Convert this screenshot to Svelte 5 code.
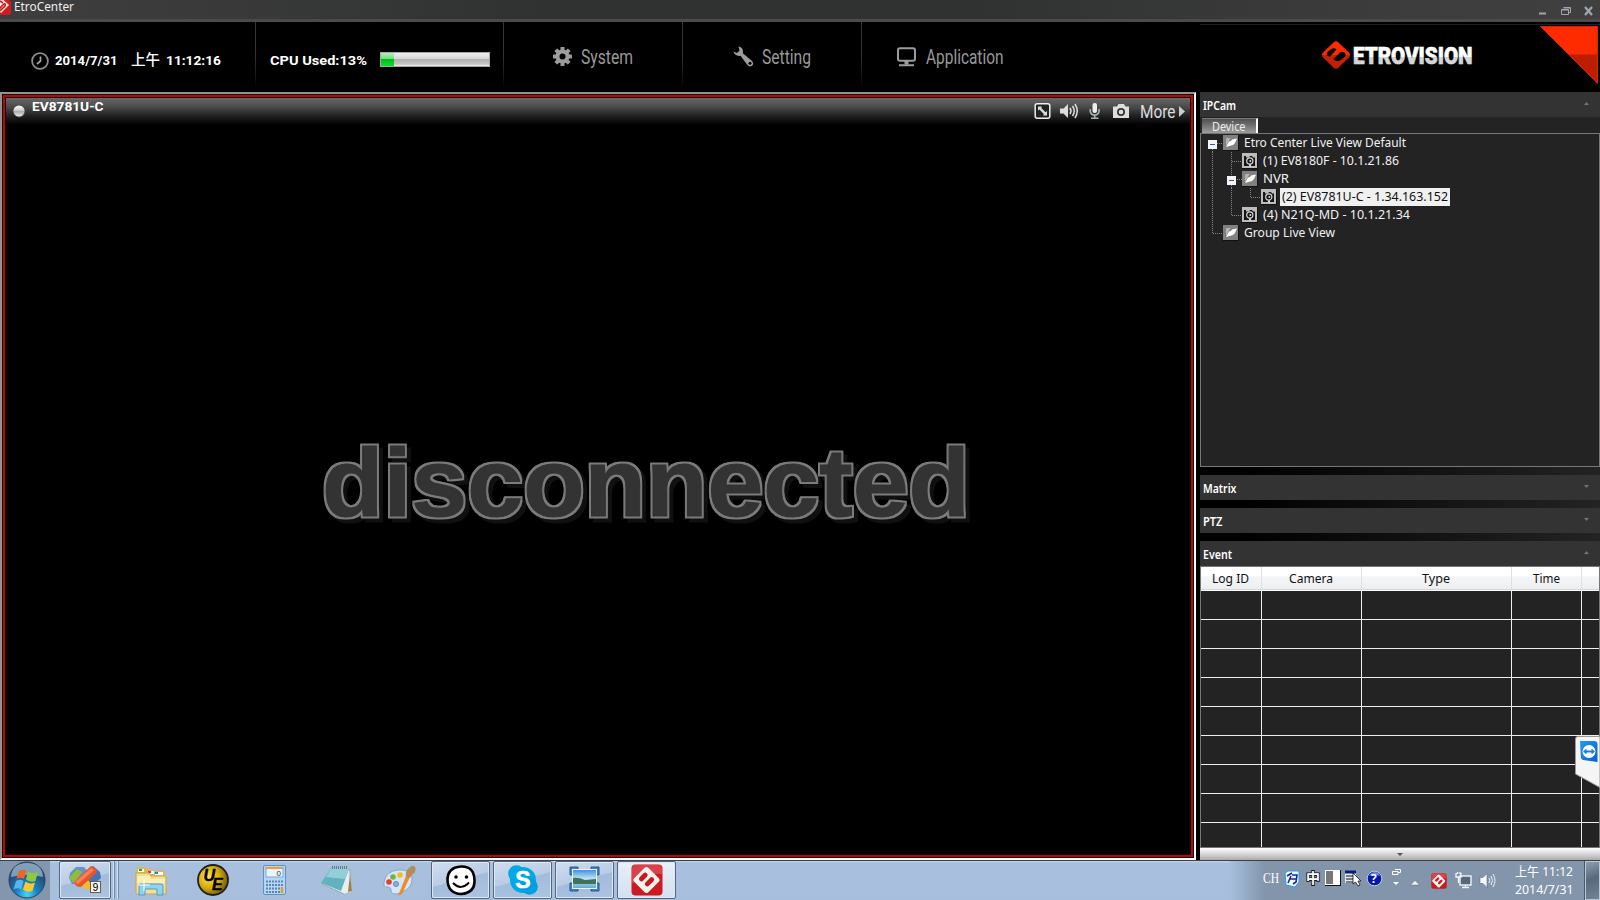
<script>
  const tree = [
    { text: 'Etro Center Live View Default', w: 162, lead: 43, icon: 'folder', ix: 22, box: 7, lines: 'M16 9.5H22 M11.5 15V18' },
    { text: '(1) EV8180F - 10.1.21.86', w: 136, lead: 62.3, icon: 'cam', ix: 41, lines: 'M11.5 0V18 M30.5 0V18 M31 9.5H41' },
    { text: 'NVR', w: 26, lead: 62.3, icon: 'folder', ix: 41, box: 26, lines: 'M11.5 0V18 M30.5 0V5 M30.5 15V18 M36 9.5H41' },
    { text: '(2) EV8781U-C - 1.34.163.152', w: 166, lead: 79, icon: 'cam', ix: 60, lines: 'M11.5 0V18 M30.5 0V18 M49.5 0V9 M50 9.5H60', selected: true },
    { text: '(4) N21Q-MD - 10.1.21.34', w: 147, lead: 62.3, icon: 'cam', ix: 41, lines: 'M11.5 0V18 M30.5 0V9 M31 9.5H41' },
    { text: 'Group Live View', w: 91, lead: 43, icon: 'folder', ix: 22, lines: 'M11.5 0V9 M12 9.5H22' }
  ];
  const columns = [
    { text: 'Log ID', w: 37 },
    { text: 'Camera', w: 44 },
    { text: 'Type', w: 28 },
    { text: 'Time', w: 27 },
    { text: '', w: 0 }
  ];
  const rows = [0, 1, 2, 3, 4, 5, 6, 7, 8];
</script>

{#snippet label(text, w, size, cls, h, base)}
  <svg class="label {cls}" width={w} height={h}>
    <text x="0" y={base} font-size={size} textLength={w} lengthAdjust="spacingAndGlyphs" xml:space="preserve">{text}</text>
  </svg>
{/snippet}

{#snippet badge(size)}
  <svg class="badge" width={size} height={size} viewBox="0 0 32 32">
    <rect x=".5" y=".5" width="31" height="31" rx="4" fill="#cd1a20" />
    <path d="M1 5Q1 1 5 1H27Q31 1 31 5V10Q14 8 1 20Z" fill="#e0666a" opacity=".55" />
    <rect x="5.5" y="6" width="20" height="20" rx="3" transform="rotate(45 15.5 16)" fill="#f7f3ee" />
    <rect x="-5" y="-2.400" width="10" height="4.800" rx="2.200" transform="translate(12.300 13) rotate(-45)" fill="#c9171e" />
    <rect x="-5.500" y="-2.400" width="11" height="4.800" rx="2.200" transform="translate(18.500 17.800) rotate(-45)" fill="#c9171e" />
  </svg>
{/snippet}

{#snippet sectionHead(text, w, up)}
  <div class="section-head">
    {@render label(text, w, 12.4, 'bold', 25, 18.3)}
    <svg width="5" height="3" viewBox="0 0 5 3"><path d={up ? 'M0 3H5L2.5 0Z' : 'M0 0H5L2.5 3Z'} fill="#737373" /></svg>
  </div>
{/snippet}

<div class="screen">
  <header class="titlebar">
    <svg class="app-icon" width="11" height="15" viewBox="0 0 11 15">
      <path d="M0 0H9L11 2V13L9 15H0Z" fill="#cf1a20" />
      <path d="M0 -3L9 5L1 13L-6 5Z" fill="#f8eeee" />
      <path d="M-1 9 4 4Q6 3 5 6L0 11M0 1 3 3" fill="none" stroke="#cf1a20" stroke-width="1.6" />
    </svg>
    {@render label('EtroCenter', 60, 12.4, 'title', 19, 11)}
    <svg class="win-buttons" width="56" height="12" viewBox="0 0 56 12">
      <path d="M0 8.5H7" stroke="#a0a6b0" stroke-width="2" />
      <path d="M24.5 2.5H31.5V7.5H29.5M22.5 4.5H29.5V9.5H22.5ZM22.5 5H29.5M24.5 3H31" fill="none" stroke="#a0a6b0" />
      <path d="M46 2 53 10M53 2 46 10" stroke="#a0a6b0" stroke-width="2.3" />
    </svg>
  </header>

  <nav class="menubar">
    <div class="cell clock">
      <svg width="18" height="18" viewBox="0 0 18 18">
        <circle cx="9" cy="9" r="7.9" fill="none" stroke="#8c8c8c" stroke-width="1.8" />
        <path d="M9.5 4.5V9L6 12" fill="none" stroke="#a5a5a5" stroke-width="1.7" />
      </svg>
      {@render label('2014/7/31', 62.5, 13.6, 'status', 20, 15)}
      {@render label('上午', 29, 14.5, 'status cjk', 20, 15)}
      {@render label('11:12:16', 55, 13.6, 'status', 20, 15)}
    </div>
    <div class="cell cpu">
      {@render label('CPU Used:13%', 97, 13.6, 'status', 20, 15)}
      <div class="meter"><i></i></div>
    </div>
    <div class="cell system">
      <svg width="19" height="19" viewBox="0 0 19 19">
        <g fill="#9c9c9c">
          {#each [0, 45, 90, 135] as a}
            <rect x="7.5" y="0" width="4" height="19" rx=".5" transform="rotate({a} 9.5 9.5)" />
          {/each}
          <circle cx="9.5" cy="9.5" r="7" />
        </g>
        <circle cx="9.5" cy="9.5" r="3" fill="#000" />
      </svg>
      {@render label('System', 52, 20.5, 'menu', 26, 20.6)}
    </div>
    <div class="cell setting">
      <svg width="21" height="21" viewBox="0 0 21 21">
        <path d="M5.5 .5Q9.5 1 10 5L9.8 7.2 18.5 14.5Q21.5 17.5 19 19.8 16.5 21.5 14 18.5L7.5 9.7Q2.5 10.8 .3 5.5L4 7 6.5 4.5Z" fill="#9c9c9c" />
        <circle cx="17" cy="17.3" r="1.5" fill="#000" />
      </svg>
      {@render label('Setting', 49, 20.5, 'menu', 26, 20.6)}
    </div>
    <div class="cell application">
      <svg width="19" height="20" viewBox="0 0 19 20">
        <rect x="1" y="1.2" width="17" height="12.6" rx="2" fill="none" stroke="#9c9c9c" stroke-width="2" />
        <path d="M9.5 14V18M2 18.3H17" stroke="#9c9c9c" stroke-width="2" />
        <path d="M7.5 14H11.5V17H7.5Z" fill="#9c9c9c" />
      </svg>
      {@render label('Application', 77.5, 20.5, 'menu', 26, 20.6)}
    </div>
    <div class="brand">
      <svg class="logo" width="160" height="40" viewBox="0 0 160 40">
        <defs>
          <linearGradient id="word" x1="0" y1="0" x2="0" y2="1">
            <stop offset="0" stop-color="#fff" /><stop offset=".56" stop-color="#fff" />
            <stop offset=".57" stop-color="#d5d5d5" /><stop offset="1" stop-color="#d5d5d5" />
          </linearGradient>
          <linearGradient id="mark" x1="0" y1="0" x2="0" y2="1">
            <stop offset=".5" stop-color="#ff2a00" /><stop offset=".51" stop-color="#c41f00" />
          </linearGradient>
        </defs>
        <path d="M11.500 1.500Q14 -1 16.500 1.500L27 11.500Q29 14 27 16.500L16.500 26.500Q14 29 11.500 26.500L1 16.500Q-1 14 1 11.500Z" fill="url(#mark)" />
        <path d="M5 14Q4 12 6 10.500L9.500 8Q12.500 6.500 14.500 8.500L8 15.500Q6 16 5 14Z" fill="#000" />
        <path d="M11.500 18 18.500 11Q21.500 10 23 12T22 16.500L18 19.500Q14 21.500 11.500 18Z" fill="#000" />
        <text x="31" y="22.500" font-size="24.500" textLength="119.500" lengthAdjust="spacingAndGlyphs" fill="url(#word)" stroke="url(#word)" stroke-width=".7">ETROVISION</text>
      </svg>
      <svg class="corner" width="60" height="60" viewBox="0 0 60 60">
        <path d="M1 0H59V58Z" fill="#ff2b00" />
        <path d="M30 28.500H59V58Z" fill="#bd1d00" />
        <path d="M1.500 .5H58.500V57Z" fill="none" stroke="#d92400" />
      </svg>
    </div>
  </nav>

  <main>
    <section class="viewer">
      <div class="channel">
        <div class="channel-bar">
          <svg class="lamp" width="14" height="14" viewBox="0 0 14 14">
            <defs><linearGradient id="lamp" x1="0" y1="0" x2="0" y2="1"><stop offset="0" stop-color="#fff" /><stop offset=".45" stop-color="#ccc" /><stop offset=".55" stop-color="#aaa" /><stop offset="1" stop-color="#eee" /></linearGradient></defs>
            <circle cx="7.300" cy="7.500" r="6" fill="#444" /><circle cx="7" cy="7" r="5.600" fill="url(#lamp)" />
          </svg>
          {@render label('EV8781U-C', 71.5, 13.6, 'status', 20, 12.7)}
          <svg class="tools" width="152" height="23" viewBox="0 0 152 23">
            <rect x="1.200" y="1.700" width="14.600" height="14.600" rx="2" fill="#222" stroke="#eee" stroke-width="1.500" />
            <path d="M4 4.500H8L7.200 6 11.500 10.200 13 9V13.500H8.800L10 12.200 5.500 7.500 4 8.500Z" fill="#ddd" />
            <path d="M26 6.500H29.500L34 2V16L29.500 11.500H26Z" fill="#ddd" />
            <path d="M36 6Q38 9 36 12M38.500 4Q42 9 38.500 14M41 2Q45.500 9 41 16" fill="none" stroke="#ddd" stroke-width="1.500" />
            <rect x="58.500" y="1" width="4.500" height="10" rx="2" fill="#eee" />
            <path d="M56.300 7V9.500Q57 13 60.700 13T65 9.500V7M60.700 13V16M57 16.300H64.500" fill="none" stroke="#aab5aa" stroke-width="1.600" />
            <path d="M79 4.500H83L84.500 2H90L91.500 4.500H95V16H79Z" fill="#ddd" />
            <circle cx="87" cy="10" r="4" fill="#333" /><circle cx="87" cy="10" r="2.300" fill="#ddd" />
            <text x="106" y="16" font-size="19" textLength="35.500" lengthAdjust="spacingAndGlyphs" fill="#ddd">More</text>
            <path d="M145 4L151 9.500 145 15Z" fill="#ccc" />
          </svg>
        </div>
        <svg class="notice" width="670" height="120" viewBox="0 0 670 120">
          <defs>
            <filter id="plate" x="-2%" y="-5%" width="104%" height="115%" color-interpolation-filters="sRGB">
              <feMorphology in="SourceAlpha" operator="dilate" radius="2" result="grown" />
              <feFlood flood-color="#7b7b7b" /><feComposite in2="grown" operator="in" result="rim" />
              <feOffset in="grown" dx="4" dy="4" result="moved" />
              <feFlood flood-color="#101010" /><feComposite in2="moved" operator="in" result="shade" />
              <feMerge><feMergeNode in="shade" /><feMergeNode in="rim" /><feMergeNode in="SourceGraphic" /></feMerge>
            </filter>
          </defs>
          <text x="2" y="86.200" font-size="96" font-weight="700" textLength="648" lengthAdjust="spacingAndGlyphs" fill="#333" stroke="#333" stroke-width="1" stroke-linejoin="round" filter="url(#plate)">disconnected</text>
        </svg>
      </div>
    </section>

    <aside>
      {@render sectionHead('IPCam', 33, true)}
      <div class="device">
        <div class="tab">{@render label('Device', 33.5, 12.4, 'tabtext', 15, 12)}</div>
        <div class="tree">
          {#each tree as n}
            <div class="node">
              <svg width={n.lead} height="18">
                <path d={n.lines} fill="none" stroke="#858585" stroke-dasharray="1 1" />
                {#if n.box}
                  <rect x={n.box} y="6" width="9" height="9" fill="#f4f4f4" />
                  <path d="M{n.box + 2} 10.500H{n.box + 7}" stroke="#3558a8" />
                {/if}
                <g transform="translate({n.ix} 1)">
                  {#if n.icon === 'folder'}
                    <rect width="16" height="16" fill="#111" /><rect width="15" height="15" fill="#818181" />
                    <path d="M3 11V4Q3 3 4 3H7.500L3 11Z" fill="#b5b5b5" />
                    <path d="M3 12 6 6.500 8 6 9 4.500 14 3.500 12 8 10 10Z" fill="#fff" />
                  {:else}
                    <rect width="16" height="16" fill="#111" /><rect width="15" height="15" fill="#bcbcbc" />
                    <path d="M2 3H4V4.500H7L8 3H10L11 4.500H13V13H2Z" fill="#151515" />
                    <circle cx="7.800" cy="8" r="3.100" fill="none" stroke="#d7d7d7" stroke-width="1.200" /><circle cx="8.300" cy="8" r="1" fill="#ddd" />
                    <path d="M7 12.500H9" stroke="#ddd" stroke-width="2" />
                  {/if}
                </g>
              </svg>
              <div class:selected={n.selected}>{@render label(n.text, n.w, 12.8, 'treetext', 18, 13)}</div>
            </div>
          {/each}
        </div>
      </div>
      <div class="gap"></div>
      {@render sectionHead('Matrix', 33.5, false)}
      <div class="gap"></div>
      {@render sectionHead('PTZ', 19.5, false)}
      <div class="gap"></div>
      {@render sectionHead('Event', 29, true)}
      <div class="log">
        <div class="log-row log-head">
          {#each columns as c}
            <div>{#if c.text}{@render label(c.text, c.w, 12.6, 'dark', 23, 16.3)}{/if}</div>
          {/each}
        </div>
        {#each rows as r}
          <div class="log-row">{#each columns as c}<div></div>{/each}</div>
        {/each}
      </div>
      <div class="expander"><svg width="6" height="3"><path d="M0 0H6L3 3Z" fill="#555" /></svg></div>
    </aside>
  </main>

  <footer>
    <div class="start">
      <svg width="38" height="38" viewBox="0 0 38 38">
        <defs>
          <radialGradient id="orb" cx=".5" cy=".9" r=".85"><stop offset="0" stop-color="#3fd9ff" /><stop offset=".35" stop-color="#1a80c0" /><stop offset=".75" stop-color="#234e78" /><stop offset="1" stop-color="#34577b" /></radialGradient>
        </defs>
        <circle cx="19" cy="19" r="18" fill="url(#orb)" stroke="#27435f" />
        <path d="M3 16Q4 2 19 2T35 16Q19 12 3 16Z" fill="#c9deec" opacity=".55" />
        <path d="M11 10Q15 7.500 18 10L16 18Q12.500 15.500 8.500 18Z" fill="#f0632a" />
        <path d="M20 10.500Q25 13.500 30 11L27.500 20Q23 22 18 18.500Z" fill="#8fc93c" />
        <path d="M8 20Q12 17.500 15.500 20L13 28.500Q10 26 5.500 28.500Z" fill="#58b5ec" />
        <path d="M17.500 20.500Q22 24 27 21.500L24.500 30Q19 32 15 28.500Z" fill="#fcc62d" />
      </svg>
    </div>
    <div class="task first">
      <svg width="34" height="30" viewBox="0 0 34 30">
        <path d="M2 8 8 2H16L22 9 12 19H4L1 13Z" fill="#6193cf" /><path d="M1 13 9 4 14 7 6 18Z" fill="#91bd36" />
        <path d="M18 6 25 1 32 7 33 13 25 20 19 20Z" fill="#4274bb" /><path d="M14 21 20 15 26 22 19 25Z" fill="#efbd29" />
        <path d="M6 17 23 1Q28 2 29 7L13 22Q7 22 6 17Z" fill="#ee5423" /><path d="M7 17 23 3 26 5 10 19Z" fill="#f6a083" opacity=".6" />
        <rect x="22.500" y="16.500" width="10" height="11" fill="#f7f5ee" stroke="#665f4b" />
        <text x="24.500" y="26" font-size="10.500">9</text>
      </svg>
    </div>
    <div class="edge"></div><div class="edge"></div>
    <div class="pin folders">
      <svg width="32" height="29" viewBox="0 0 32 29">
        <path d="M1 4V2L3 0H12L14 3H30V8H1Z" fill="#d9b95c" /><path d="M3 2H9V5H3ZM13 4H19V7H13ZM20 5H28V8H20Z" fill="#fff" />
        <path d="M4 2H7V4H4Z" fill="#26a426" /><path d="M13 4H16V6H13Z" fill="#dd3b2a" /><path d="M20 5H23V7H20Z" fill="#2a80d0" />
        <path d="M1 6H14L16 9H31V27H1Z" fill="#f3e093" stroke="#c9a648" /><path d="M2 9H14L16 12H30V16H2Z" fill="#faefb5" />
        <path d="M4 28V19Q4 17 6 17H26Q28 17 28 19V28H22V22H10V28Z" fill="#8ed4ee" stroke="#4f9cc4" />
        <path d="M9 12V24M3 18H15" stroke="#fff" />
      </svg>
    </div>
    <div class="pin ue">
      <svg width="32" height="32" viewBox="0 0 32 32">
        <defs><radialGradient id="gold" cx=".35" cy=".4" r=".7"><stop offset="0" stop-color="#ffe94c" /><stop offset=".55" stop-color="#cfa80b" /><stop offset="1" stop-color="#665006" /></radialGradient></defs>
        <circle cx="16" cy="16" r="15" fill="url(#gold)" stroke="#202020" stroke-width="1.800" />
        <text x="6.500" y="17" font-size="16" font-weight="700" font-style="italic" stroke="#000" stroke-width=".4">U<tspan dx="-3" dy="9">E</tspan></text>
      </svg>
    </div>
    <div class="pin calc">
      <svg width="23" height="30" viewBox="0 0 23 30">
        <rect x=".5" y=".5" width="22" height="29" rx="1.500" fill="#b7d6f3" stroke="#5d91c9" />
        <rect x="3" y="3" width="17" height="9" fill="#e8f4fd" stroke="#7aa9d4" /><path d="M2.500 3H20" stroke="#f39b2d" stroke-width="2" />
        <text x="13.500" y="11.300" font-size="8" fill="#333">0</text>
        <path d="M3 16.500H20M3 20H20M3 23.500H17M3 27H17" stroke="#5c83b5" stroke-width="2" stroke-dasharray="2 1" /><path d="M19 22V28" stroke="#e99b26" stroke-width="2.500" />
      </svg>
    </div>
    <div class="pin note">
      <svg width="32" height="30" viewBox="0 0 32 30">
        <path d="M11 2 29 5 28 27 23 29 1 19Z" fill="#e9eff0" stroke="#96a5aa" /><path d="M11 2 28 4 20 26 0 18Z" fill="#62b2c1" /><path d="M11 2 28 4 24 14 5 12Z" fill="#a8dbe2" opacity=".7" />
        <path d="M28 6 31 26 23 29Z" fill="#e8edee" /><path d="M29 9 31 26 27 27Z" fill="#9b8050" /><path d="M11 2.500H27" stroke="#607f88" stroke-width="3" stroke-dasharray="1 1" />
      </svg>
    </div>
    <div class="pin paint">
      <svg width="33" height="32" viewBox="0 0 33 32">
        <path d="M1 17Q3 6 15 5 27 4 29 12 30 23 19 27 11 31 8 27 9 22 4 22 0 22 1 17Z" fill="#d4e6f7" stroke="#84a8ce" />
        <circle cx="6" cy="17" r="2.800" fill="#e33f2e" /><circle cx="10" cy="12" r="2.800" fill="#6bb83b" /><circle cx="17" cy="10" r="2.800" fill="#f3ba29" /><circle cx="13" cy="19" r="2.500" fill="#8ab5dc" stroke="#5d86b4" />
        <path d="M15 31 23 11 27 12 19 29Z" fill="#ee8b2a" /><path d="M23 12Q22 6 26 3 30 -1 32 2 34 6 30 9 28 10 27 13Z" fill="#b98a5b" />
      </svg>
    </div>
    <div class="task smile">
      <svg width="30" height="31" viewBox="0 0 30 31">
        <path d="M15 1.500Q28 1 28.500 15 29 28 15 29 2 28.500 1.500 15 1.500 2.500 15 1.500Z" fill="#fff" stroke="#000" stroke-width="2.600" />
        <circle cx="10" cy="12" r="1.800" /><circle cx="20.500" cy="12" r="1.800" /><path d="M7 18Q15 26 23 17.500" fill="none" stroke="#000" stroke-width="2" />
      </svg>
    </div>
    <div class="task">
      <svg width="30" height="30" viewBox="0 0 30 30">
        <circle cx="15" cy="15" r="13" fill="#00a8e6" /><circle cx="8.500" cy="8.500" r="8.300" fill="#00a8e6" /><circle cx="21.500" cy="21.500" r="8.300" fill="#009fdf" />
        <text x="7.300" y="23" font-size="23" font-weight="700" fill="#fff" stroke="#fff" stroke-width=".6">S</text>
      </svg>
    </div>
    <div class="task">
      <svg width="31" height="28" viewBox="0 0 31 28">
        <defs><linearGradient id="sky" x1="0" y1="0" x2="0" y2="1"><stop offset="0" stop-color="#3b8ede" /><stop offset=".5" stop-color="#c5e4f7" /><stop offset="1" stop-color="#5ca5d7" /></linearGradient></defs>
        <path d="M1 1H9V6H6V9H1ZM22 1H30V9H25V6H22ZM1 17H6V20H9V25H1ZM30 17V25H22V20H25V17Z" fill="#3b81c3" stroke="#225b94" />
        <rect x="3.500" y="3.500" width="24" height="19" fill="url(#sky)" stroke="#f2f2f2" />
        <path d="M4 12Q9 11 16 14L27 13V18H4Z" fill="#3f7458" />
      </svg>
    </div>
    <div class="task active">{@render badge(32)}</div>

    <div class="tray">
      {@render label('CH', 16, 15, 'ch', 20, 14.5)}
      <svg width="17" height="18" viewBox="0 0 17 18"><path d="M1 3 4 1H15V12L11 17 2 15Z" fill="#effaff" stroke="#249ce8" /><path d="M3 6 8 3M8 5H13L12 12 9 14M5 9H13M7 6 4 13" fill="none" stroke="#1724a4" stroke-width="1.600" /></svg>
      {@render label('中', 14, 14, 'ime', 20, 15)}
      <svg width="17" height="17" viewBox="0 0 17 17"><path d="M0 0H16V16H0Z" fill="#111" /><path d="M0 0H15V15H0Z" fill="#fff" /><path d="M1 1H8V14H1Z" fill="#777" /></svg>
      <svg width="17" height="17" viewBox="0 0 17 17"><path d="M0 1H11V13H0Z" fill="#e5e9ef" /><path d="M0 2H11" stroke="#061c83" stroke-width="3" /><path d="M1 6H9M1 9H9M1 12H10" stroke="#111" /><path d="M8 3V14L10.500 12 13 16 15 15 13 11H16Z" fill="#fff" stroke="#111" stroke-width=".8" /></svg>
      <svg width="17" height="17" viewBox="0 0 17 17"><circle cx="8.500" cy="8.500" r="7.300" fill="#0618a8" stroke="#c6ccd8" stroke-width="1" /><path d="M3 6Q5 2 9 2T14 6Q9 4 3 6Z" fill="#6a81e6" /><text x="5" y="13" font-size="12" font-weight="700" fill="#fff">?</text></svg>
      <svg class="langbar" width="9" height="18" viewBox="0 0 9 18"><path d="M3 1.500H8.500V4.500H6M.5 3.500H6V6.500H.5Z" fill="none" stroke="#fff" /><path d="M1 14H7L4 17Z" fill="#fff" /></svg>
      <svg class="more" width="10" height="6" viewBox="0 0 10 6"><path d="M5 .5 9.500 5H.5Z" fill="#f3f5f8" stroke="#5c6b7d" stroke-width=".5" /></svg>
      <div class="tray-badge">{@render badge(16)}</div>
      <svg class="net" width="17" height="17" viewBox="0 0 17 17"><rect x="5" y="4" width="11" height="9" fill="#56687d" stroke="#f4f6f8" stroke-width="1.400" /><path d="M10.500 13V15M7 15.500H14M1 1V5H6V1M3.500 5V11M2.500 0V2M5 0V2" fill="none" stroke="#f4f6f8" stroke-width="1.300" /></svg>
      <svg class="vol" width="17" height="17" viewBox="0 0 17 17"><path d="M1 5.500H4L8 1.500V15.500L4 11.500H1Z" fill="#f7f9fb" stroke="#5c6d80" stroke-width=".6" /><path d="M10 6Q11.500 8.500 10 11M12 4Q15 8.500 12 13M14 2Q18 8.500 14 15" fill="none" stroke="#eef2f6" /></svg>
      <div class="time">
        {@render label('上午 11:12', 58, 12.6, 'tasktime', 18, 13)}
        {@render label('2014/7/31', 58.5, 12.6, 'tasktime', 18, 13)}
      </div>
      <div class="peek"></div>
    </div>
  </footer>

  <svg class="remote" width="25" height="54" viewBox="0 0 25 54">
    <defs><linearGradient id="tv" x1="0" y1="0" x2="1" y2="1"><stop offset="0" stop-color="#249bf2" /><stop offset="1" stop-color="#045fd3" /></linearGradient></defs>
    <path d="M25 .5H3Q.5 .5 .5 3V38L25 51.500Z" fill="#f5f5f5" stroke="#999" />
    <path d="M5 5H20Q22.500 5.500 22.500 8V26L8 24Q5.800 23.500 5.800 21Z" fill="url(#tv)" />
    <circle cx="14" cy="15.500" r="6.500" fill="#fff" /><path d="M8 15.500 11.500 12.500V14.500H16.500V12.500L20 15.500 16.500 18.500V16.500H11.500V18.500Z" fill="#1681e4" />
  </svg>
</div>

<style>
  :global(body) { margin: 0; background: #000; overflow: hidden; }
  .screen { position: relative; width: 1600px; height: 900px; display: flex; flex-direction: column; overflow: hidden; background: #000; font-family: "Noto Sans", "Noto Sans CJK TC", sans-serif; }
  svg { display: block; flex: none; }
  .label { overflow: visible; fill: #f2f2f2; }
  .bold { font-weight: 600; fill: #fff; }
  .title { fill: #eee; }
  .status { font-family: Roboto, "Noto Sans CJK TC", sans-serif; font-weight: 700; fill: #fff; }
  .cjk { font-weight: 500; font-family: "Noto Sans CJK TC", sans-serif; }
  .menu { font-family: Roboto, sans-serif; font-weight: 400; fill: #989898; }
  .dark { fill: #111; }
  .tabtext { fill: #eee; }

  .titlebar { height: 19px; flex: none; display: flex; background: linear-gradient(90deg, #3e3e3e, #303231 35%, #303231 60%, #3d3d3d 90%, #404040); border-bottom: 3px solid #4a4b4a; }
  .app-icon { margin-right: 3px; }
  .win-buttons { margin: 5px 5px 0 auto; }

  .menubar { height: 70px; flex: none; display: flex; }
  .cell { box-sizing: border-box; height: 70px; display: flex; align-items: flex-start; border-right: 1px solid; border-image: linear-gradient(#363636, #333 50%, #000 95%) 1; }
  .clock { width: 256px; padding: 28px 0 0 31px; }
  .clock svg:first-child { margin: 2px 6px 0 0; }
  .clock :global(.cjk) { margin: 0 6px 0 13.500px; }
  .cpu { width: 248px; padding: 28px 0 0 14px; }
  .meter { width: 108px; height: 13px; margin: 2px 0 0 13px; border: 1px solid #a7a7a7; background: linear-gradient(#eee, #d6d6d6 46%, #b3b3b3 50%, #c5c5c5 85%, #f2f2f2); }
  .meter i { display: block; width: 13px; height: 13px; background: linear-gradient(#b5edba, #74dc80 45%, #00bd1a 50%, #12dc30); }
  .system { width: 179px; padding: 21px 0 0 49px; gap: 8.500px; }
  .setting { width: 179px; padding: 21px 0 0 49.500px; gap: 8px; }
  .system > svg:first-child { margin-top: 4px; }
  .application > svg:first-child { margin-top: 3.500px; }
  .setting > svg:first-child { margin-top: 2.500px; }
  .application { width: 338px; padding: 21px 0 0 35px; gap: 10px; border: 0; }
  .brand { box-sizing: border-box; width: 400px; margin-top: 2px; border-top: 1px solid #202020; display: flex; }
  .logo { margin: 16px 0 0 122px; font-family: Roboto, sans-serif; font-weight: 900; }
  .corner { margin: 1px 1px 0 auto; }

  main { height: 768px; flex: none; display: flex; }
  .viewer { box-sizing: border-box; width: 1196px; margin-right: 4px; border: 2px solid #fff; border-top-color: #929292; border-left-color: #929292; padding: 1px; }
  .channel { box-sizing: border-box; height: 762px; border: 2px solid #c80000; padding: 1px; }
  .channel-bar { display: flex; height: 27px; background: linear-gradient(#686868, #484848 35%, #222 65%, #000); }
  .lamp { margin: 6px 6px 0 6px; }
  .tools { margin: 4px 4px 0 auto; font-family: Roboto, sans-serif; font-weight: 400; }
  .notice { margin: 305px 0 0 313.500px; font-family: "Liberation Sans", sans-serif; }

  aside { width: 400px; display: flex; flex-direction: column; }
  .section-head { height: 25px; flex: none; display: flex; justify-content: space-between; background: #333; padding: 0 11px 0 3px; }
  .section-head > svg:last-child { margin-top: 10px; }
  .device { height: 350px; background: #232323; display: flex; flex-direction: column; }
  .tab { width: 44px; height: 14px; margin: 1px 0 0 2px; padding-left: 10px; background: linear-gradient(#515151, #6d6d6d 40%, #9e9e9e); border-top: 1px solid #777; border-right: 2px solid #fff; }
  .tree { box-sizing: border-box; flex: 1; border: 1px solid #777; }
  .node { height: 18px; display: flex; }
  .selected { background: #f0f0f0; padding: 0 2px; }
  .selected :global(.label) { fill: #111; }
  .gap { height: 8px; flex: none; background: linear-gradient(90deg, #000 10%, #232323); }
  .log { box-sizing: border-box; height: 282px; overflow: hidden; border: 1px solid #777; background: #232323; }
  .log-row { display: grid; grid-template-columns: 61px 100px 150px 70px 1fr; height: 29px; }
  .log-row > div { box-sizing: border-box; border-right: 1px solid #eee; border-bottom: 1px solid #eee; }
  .log-row > div:last-child { border-right: 0; }
  .log-head { height: 24px; background: linear-gradient(#fff 38%, #f5f6f8 40%, #ebedf0); }
  .log-head > div { display: flex; justify-content: center; padding-right: 1px; border-right-color: #dcdfe3; border-bottom: 1px solid #fff; box-shadow: inset 0 -1px #d5d5d5; }
  .expander { height: 12px; flex: none; display: flex; justify-content: center; align-items: center; background: linear-gradient(#fff, #bdbdbd 80%, #aaa); }

  footer { box-sizing: border-box; height: 40px; display: flex; border-top: 1px solid #39424e; background: linear-gradient(#c4d5e8 0, #a8c0dd 2px, #a7bfdc); }
  .start { width: 50px; margin-right: 9px; background: #8396ad; }
  .start svg { margin: 0 0 0 8px; }
  .task { box-sizing: border-box; width: 59px; height: 38px; margin: 0 3px 0 0; display: flex; align-items: center; justify-content: center; border: 1px solid #54677f; border-radius: 2px; background: linear-gradient(165deg, #d0deef, #b9cce5 48%, #a4bcdc 50%, #acc4e0); box-shadow: inset 0 0 0 1px #dce8f5; }
  .first { width: 52px; margin-right: 0; }
  .edge { width: 3px; height: 38px; border-right: 1px solid #6f88a4; box-shadow: inset -1px 0 #d4e3f2; }
  .pin { height: 38px; }
  .pin svg { margin-top: 4px; }
  .folders { width: 61.500px; padding-left: 16px; }
  .folders svg { margin-top: 6px; }
  .ue { width: 66px; margin-top: -1px; }
  .calc { width: 58px; }
  .note { width: 62px; }
  .paint { width: 48.500px; }
  .ue text, .first text, .calc text, .task text { font-family: "Liberation Sans", sans-serif; }
  .active { background: linear-gradient(#e9f0f8, #d2e0f0); }
  .tray { flex: 1; display: flex; margin-left: 550.500px; background: linear-gradient(90deg, #a7bfdc 0, #8295ab 35px); }
  .tray > :global(svg) { margin-top: 9px; }
  .tray > :global(svg:nth-child(1)) { margin: 7px 5px 0 33px; }
  .tray > :global(svg:nth-child(3)) { margin: 7px 5px 0 5px; }
  .ch { font-family: "Liberation Serif", serif; fill: #fff; }
  .ime { font-weight: 700; fill: #fff; stroke: #111; stroke-width: 1.800px; paint-order: stroke; }
  .tray > :global(svg:nth-child(4)) { margin-right: 3px; }
  .tray > :global(svg:nth-child(5)) { margin-right: 4px; }
  .tray > .langbar { margin: 7px 9px 0 9px; }
  .tray > .more { margin: 19px 11px 0 0; }
  .tray-badge { margin: 12px 8px 0 0; }
  .tray > .net { margin: 11px 7px 0 0; }
  .tray > .vol { margin: 11px 19px 0 0; }
  .time { padding-top: 2px; }
  .tasktime { fill: #fff; }
  .peek { box-sizing: border-box; width: 15px; height: 39px; margin-left: auto; border: 1px solid #b9c8d8; background: linear-gradient(160deg, #8d9eb1, #59697c 45%, #718398); box-shadow: -1px 0 #4b5a6b; }
  .remote { position: absolute; left: 1575px; top: 736px; }
</style>
